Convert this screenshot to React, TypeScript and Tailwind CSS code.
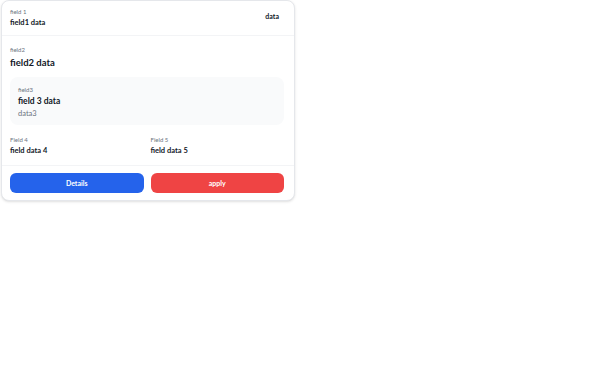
import React from "react";

const Field: React.FC<{ label: string; value: string }> = ({ label, value }) => (
  <div className="flex flex-col">
    <span className="text-[6px] leading-[9px] text-[#6b7280]">{label}</span>
    <span className="text-[7.5px] leading-[11px] font-bold text-[#111827] mt-[1px]">
      {value}
    </span>
  </div>
);

const App: React.FC = () => {
  return (
    <div
      className="w-[600px] h-[384px] bg-white"
      style={{ fontFamily: 'Lato, "Noto Sans", sans-serif' }}
    >
      <div className="ml-[1px] w-[294px] bg-white border border-[#e5e7eb] rounded-lg shadow-sm overflow-hidden">
        <div className="flex justify-between items-start pl-[8px] pr-[10px] pt-[6px] pb-[7px] border-b border-[#f3f4f6]">
          <Field label="field 1" value="field1 data" />
          <span className="text-[7px] font-bold text-[#111827] mt-[4px] mr-[5px]">data</span>
        </div>

        <div className="pl-[8px] pr-[10px] pt-[9px]">
          <span className="block text-[6px] leading-[9px] text-[#6b7280]">field2</span>
          <span className="block text-[9.5px] leading-[14px] font-bold text-[#111827] mt-[2px]">
            field2 data
          </span>

          <div className="mt-[7px] bg-[#f9fafb] rounded-lg px-[8px] pt-[8px] pb-[6px]">
            <span className="block text-[6px] leading-[9px] text-[#6b7280]">field3</span>
            <span className="block text-[8.5px] leading-[12px] font-bold text-[#111827] mt-[1px]">
              field 3 data
            </span>
            <span className="block text-[7.5px] leading-[11px] text-[#6b7280] mt-[1px]">data3</span>
          </div>

          <div className="grid grid-cols-2 gap-[7px] mt-[10px] pb-[9px]">
            <Field label="Field 4" value="field data 4" />
            <Field label="Field 5" value="field data 5" />
          </div>
        </div>

        <div className="flex gap-[7px] pl-[8px] pr-[10px] pt-[7px] pb-[7px] border-t border-[#f3f4f6]">
          <button className="flex-1 h-[20px] rounded-md bg-[#2563eb] text-white text-[7px] font-bold">
            Details
          </button>
          <button className="flex-1 h-[20px] rounded-md bg-[#ef4444] text-white text-[7px] font-bold">
            apply
          </button>
        </div>
      </div>
    </div>
  );
};

export default App;
